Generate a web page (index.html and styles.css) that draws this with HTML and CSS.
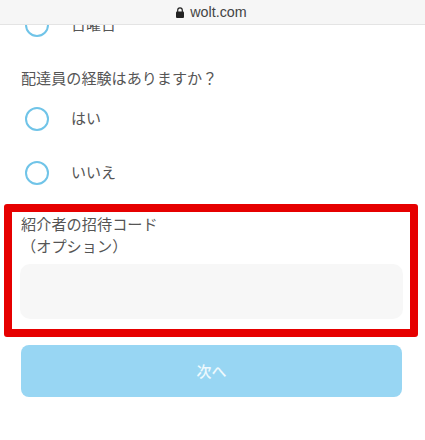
FILE: index.html
```html
<!DOCTYPE html>
<html lang="ja">
<head>
    <meta charset="UTF-8">
    <meta name="viewport" content="width=device-width, initial-scale=1.0">
    <title>wolt.com</title>
    <link rel="stylesheet" href="styles.css">
</head>
<body>

    <div class="address-bar">
        <svg class="lock" width="8" height="11" viewBox="0 0 8 11">
            <path d="M1.7 5V3.2a2.3 2.3 0 0 1 4.6 0V5" fill="none" stroke="#222" stroke-width="1.2"/>
            <rect x="0" y="4.6" width="8" height="6.4" rx="1" fill="#222"/>
        </svg>
        <span>wolt.com</span>
    </div>

    <form class="form">
        <label class="radio-row radio-row-clipped">
            <span class="radio"></span>
            <span class="radio-text">日曜日</span>
        </label>

        <p class="question">配達員の経験はありますか？</p>

        <label class="radio-row">
            <span class="radio"></span>
            <span class="radio-text">はい</span>
        </label>
        <label class="radio-row">
            <span class="radio"></span>
            <span class="radio-text">いいえ</span>
        </label>

        <div class="highlight">
            <label class="field-label" for="referral">紹介者の招待コード<br>（オプション）</label>
            <div class="field-input" id="referral"></div>
        </div>

        <div class="next-button">次へ</div>
    </form>

</body>
</html>
```

FILE: styles.css
```css
html, body {
    margin: 0;
    height: 100%;
    overflow: hidden;
    background-color: #fff;
}
body {
    font-family: "Noto Sans CJK JP", "Noto Sans", sans-serif;
    font-size: 15px;
    color: #555;
}
.address-bar {
    position: absolute;
    top: 0;
    left: 0;
    right: 0;
    height: 24px;
    display: flex;
    align-items: center;
    justify-content: center;
    gap: 6px;
    padding-right: 2px;
    background-color: #f6f6f6;
    border-bottom: 1px solid #e4e4e4;
    font-family: "Liberation Sans", Arial, sans-serif;
    font-size: 14.3px;
    color: #444;
}
.lock {
    display: block;
}
.form {
    padding: 0 23px 0 21px;
}
.radio-row {
    display: flex;
    align-items: center;
    height: 54px;
    padding-left: 4px;
    gap: 22px;
}
.radio-row-clipped {
    margin-top: -2px;
}
.radio {
    width: 20px;
    height: 20px;
    border: 2px solid #70c4e8;
    border-radius: 50%;
}
.radio-text {
    margin-bottom: 3px;
}
.question {
    margin: 0;
    height: 40px;
    line-height: 50px;
    font-size: 15.1px;
}
.highlight {
    margin: 4px -16px 0 -17px;
    padding: 0 7px 10px 9px;
    border: 8px solid #e60000;
    border-radius: 3px;
}
.field-label {
    display: block;
    line-height: 22px;
    font-size: 15.2px;
}
.field-input {
    height: 55px;
    margin: 8px 0 0 -1px;
    background-color: #f7f7f7;
    border-radius: 10px;
}
.next-button {
    height: 52px;
    margin-top: 8px;
    line-height: 52px;
    text-align: center;
    font-weight: 500;
    color: #eef9fd;
    background-color: #98d6f3;
    border-radius: 8px;
}
```
